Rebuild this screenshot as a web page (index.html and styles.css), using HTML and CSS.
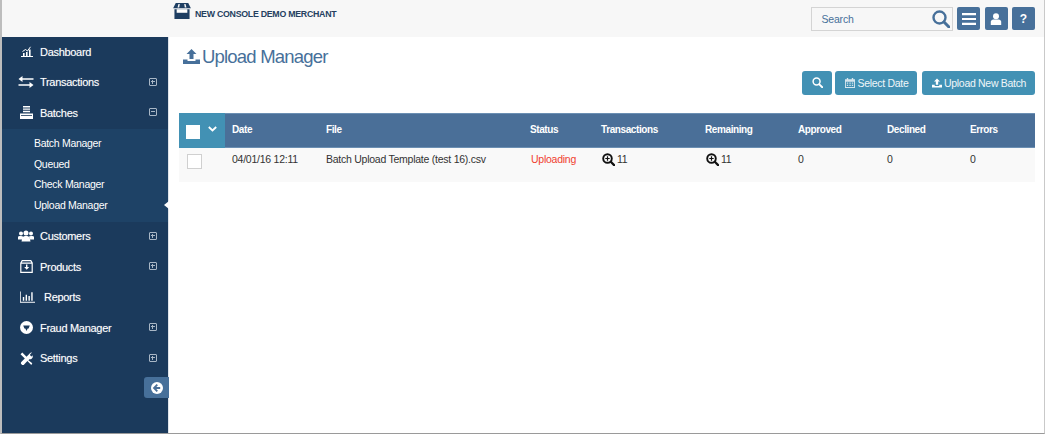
FILE: index.html
```html
<!DOCTYPE html>
<html lang="en">
<head>
<meta charset="utf-8">
<title>Upload Manager</title>
<link rel="stylesheet" href="styles.css">
</head>
<body>
<div class="app">
  <header class="topbar">
    <div class="brand">
      <svg class="brand-icon" viewBox="0 0 20 18"><path fill="#1f3f63" d="M3 0h14l3 6H0z"/><path fill="#1f3f63" d="M1.500 7h17v11h-17z"/><path fill="#fff" d="M4 7h12v4H4z"/><path fill="#f7f7f7" d="M6 1h1.500l-.6 4H5zM12.500 1H14l1 4h-1.900z"/></svg>
      <span class="brand-name">NEW CONSOLE DEMO MERCHANT</span>
    </div>
    <div class="top-tools">
      <div class="search">
        <span class="search-text">Search</span>
        <svg class="search-icon" viewBox="0 0 18 18"><circle cx="7.500" cy="7.500" r="6" fill="none" stroke="#47709a" stroke-width="2.400"/><path d="M12 12l5 5" stroke="#47709a" stroke-width="3" stroke-linecap="round"/></svg>
      </div>
      <div class="tool-btn"><svg class="i14" viewBox="0 0 14 14"><path fill="#fff" d="M0 1h14v2.200H0zM0 5.900h14v2.200H0zM0 10.800h14V13H0z"/></svg></div>
      <div class="tool-btn"><svg class="i12" viewBox="0 0 12 12"><circle cx="6" cy="3.300" r="3" fill="#fff"/><path fill="#fff" d="M.8 12V8.800C.8 7.300 2 6.400 3.400 6.400h5.200c1.400 0 2.600.9 2.600 2.400V12z"/></svg></div>
      <div class="tool-btn help">?</div>
    </div>
  </header>
  <div class="body">
    <nav class="sidebar">
      <a class="nav-item"><svg class="nav-icon dash-icon" viewBox="0 0 12 11"><path fill="none" stroke="#fff" stroke-width="1" d="M0 10.500h12M1.500 5.500l3-2 2 1.500L9.500.8"/><path fill="#fff" d="M2 7h1.600v3H2zM5 6h1.600v4H5zM8 3.500h1.600V10H8z"/></svg><span>Dashboard</span></a>
      <a class="nav-item"><svg class="nav-icon wide" viewBox="0 0 15 12"><path fill="#fff" d="M4 0v2.200h11v1.600H4V6L0 3zM11 6v2.200H0v1.600h11V12l4-3z"/></svg><span>Transactions</span><i class="toggle plus"></i></a>
      <a class="nav-item"><svg class="nav-icon batch-icon" viewBox="0 0 13 13"><path fill="#fff" d="M3 0h7v1.400H3zM3 2.400h7v1.400H3zM3 4.800h7v1.400H3zM0 7.500h13V13H0z"/><path fill="#1b3a5c" d="M1 9h11v.8H1z"/></svg><span>Batches</span><i class="toggle minus"></i></a>
      <div class="subnav">
        <a>Batch Manager</a>
        <a>Queued</a>
        <a>Check Manager</a>
        <a class="active">Upload Manager</a>
      </div>
      <a class="nav-item"><svg class="nav-icon wide" viewBox="0 0 16 11"><circle cx="3" cy="3" r="2" fill="#fff"/><circle cx="13" cy="3" r="2" fill="#fff"/><circle cx="8" cy="2.500" r="2.500" fill="#fff"/><path fill="#fff" d="M0 9V6.500C0 5.700 1 5.400 3 5.400c1 0 1.600.2 2 .5L4 9zM16 9V6.500c0-.8-1-1.100-3-1.100-1 0-1.600.2-2 .5l1 3.100zM3.500 11l1-4c.3-1 1.700-1.500 3.500-1.500s3.200.5 3.500 1.500l1 4z"/></svg><span>Customers</span><i class="toggle plus"></i></a>
      <a class="nav-item"><svg class="nav-icon" viewBox="0 0 13 13"><path fill="none" stroke="#fff" stroke-width="1.200" d="M.8 3L2.200.7h8.600L12.200 3v9.300H.8zM.8 3.200h11.400"/><path fill="#fff" d="M6 4.500h1.400V7h1.800L6.700 9.800 4.200 7H6z"/></svg><span>Products</span><i class="toggle plus"></i></a>
      <a class="nav-item"><svg class="nav-icon reports-icon" viewBox="0 0 16 12"><path fill="#fff" d="M0 0h.8v11H16v1H0zM3 6h1.500v4H3zM6 3.500h1.500V10H6zM9 5h1.500v5H9zM12 1h1.500v9H12z"/></svg><span>Reports</span></a>
      <a class="nav-item"><svg class="nav-icon" viewBox="0 0 13 13"><circle cx="6.500" cy="6.500" r="6.500" fill="#fff"/><path fill="#1b3a5c" d="M3.200 4.500h6.600L8.600 7.600H7.700L6.500 10 5.300 7.600H4.400z"/></svg><span>Fraud Manager</span><i class="toggle plus"></i></a>
      <a class="nav-item"><svg class="nav-icon" viewBox="0 0 13 13"><path fill="#fff" d="M.5 2.300L2.300.5 6.500 4.700l3-3C9.700 1 10.800.3 12 .4L10 2.600l.6 1.500 1.500.5L12.600 3c.6 1.500.2 3-1.200 3.900-.7.400-1.400.4-2 .3l-1 1 3.900 3-1 1.700-3.900-3.800-3.500 3.600c-.6.600-1.500.6-2 0l-.6-.6c-.6-.6-.5-1.400 0-2l3.500-3.500z"/></svg><span>Settings</span><i class="toggle plus"></i></a>
      <div class="collapse"><svg class="i12" viewBox="0 0 12 12"><circle cx="6" cy="6" r="6" fill="#fff"/><path fill="none" stroke="#4a6f98" stroke-width="1.800" d="M6.300 2.600L3 6l3.300 3.400M3.200 6h6"/></svg></div>
    </nav>
    <main class="content">
      <h1 class="title"><svg class="title-icon" viewBox="0 0 17 15"><path fill="#47709a" d="M8.500 0l5 5h-3v5h-4V5h-3zM0 10.500h4.500V12h8v-1.500H17V15H0z"/></svg><span>Upload Manager</span></h1>
      <div class="actions">
        <div class="btn btn-search"><svg class="i11" viewBox="0 0 12 12"><circle cx="5" cy="5" r="3.800" fill="none" stroke="#fff" stroke-width="1.600"/><path d="M8 8l3.200 3.200" stroke="#fff" stroke-width="2" stroke-linecap="round"/></svg></div>
        <div class="btn btn-date"><svg class="i10" viewBox="0 0 11 11"><path fill="#d7e6ee" d="M0 1.500h2V0h1.500v1.500h4V0H9v1.500h2V11H0zM1 4v6h9V4z"/><path fill="#d7e6ee" d="M2 5h1.500v1.300H2zM4.800 5h1.500v1.300H4.800zM7.500 5H9v1.300H7.500zM2 7.500h1.500v1.300H2zM4.800 7.500h1.500v1.300H4.800zM7.500 7.500H9v1.300H7.500z"/></svg><span>Select Date</span></div>
        <div class="btn btn-upload"><svg class="i10" viewBox="0 0 11 10"><path fill="#fff" d="M5.500 0l3.300 3.300H6.800V7H4.200V3.300H2.200zM0 7h3v1.200h5V7h3v3H0z"/></svg><span>Upload New Batch</span></div>
      </div>
      <div class="grid head">
        <div class="check-cell"><span class="check-box"></span><svg class="chev" viewBox="0 0 9 6"><path fill="none" stroke="#fff" stroke-width="1.800" d="M.8 1l3.700 3.500L8.200 1"/></svg></div>
        <div>Date</div><div>File</div><div>Status</div><div>Transactions</div><div>Remaining</div><div>Approved</div><div>Declined</div><div>Errors</div>
      </div>
      <div class="grid row">
        <div class="row-check"><span class="row-box"></span></div>
        <div>04/01/16 12:11</div>
        <div>Batch Upload Template (test 16).csv</div>
        <div class="uploading">Uploading</div>
        <div class="count"><svg class="zoom-icon" viewBox="0 0 13 13"><circle cx="5.500" cy="5.500" r="4.300" fill="none" stroke="#111" stroke-width="1.900"/><path d="M8.800 8.800l3.300 3.300" stroke="#111" stroke-width="2.200" stroke-linecap="round"/><path d="M3.300 5.500h4.400M5.500 3.300v4.400" stroke="#111" stroke-width="1.200"/></svg><span>11</span></div>
        <div class="count"><svg class="zoom-icon" viewBox="0 0 13 13"><circle cx="5.500" cy="5.500" r="4.300" fill="none" stroke="#111" stroke-width="1.900"/><path d="M8.800 8.800l3.300 3.300" stroke="#111" stroke-width="2.200" stroke-linecap="round"/><path d="M3.300 5.500h4.400M5.500 3.300v4.400" stroke="#111" stroke-width="1.200"/></svg><span>11</span></div>
        <div>0</div><div>0</div><div>0</div>
      </div>
    </main>
  </div>
</div>
</body>
</html>
```

FILE: styles.css
```css
* { box-sizing: border-box; }
html, body { margin: 0; height: 100%; overflow: hidden; background: #fff; }
body { font-family: "Liberation Sans", Arial, sans-serif; }
svg { display: block; flex: none; }

.app { width: 1045px; height: 434px; display: flex; flex-direction: column; border-left: 2px solid #bdbdbd; border-right: 1px solid #c9c9c9; border-bottom: 1px solid #9a9a9a; }

.topbar { height: 37px; flex: none; background: #f7f7f7; display: flex; justify-content: space-between; align-items: flex-start; }
.brand { display: flex; align-items: flex-start; margin-left: 171px; padding-top: 3px; gap: 4px; }
.brand-icon { width: 18px; height: 16px; }
.brand-name { font-size: 8.800px; letter-spacing: -.27px; font-weight: 700; color: #24405f; margin-top: 6px; white-space: nowrap; }
.top-tools { display: flex; gap: 4.500px; padding: 7px 9px 0 0; }
.search { width: 142px; height: 24px; background: #f7f7f7; border: 1px solid #d4d4d4; display: flex; align-items: center; justify-content: space-between; padding: 0 2px 0 10px; }
.search-text { font-size: 10.500px; letter-spacing: -.2px; color: #47709a; }
.search-icon { width: 18px; height: 18px; }
.tool-btn { width: 23px; height: 23px; background: #47709a; border-radius: 2px; display: flex; align-items: center; justify-content: center; color: #fff; font-weight: 700; font-size: 12px; }
.i14 { width: 14px; height: 14px; }
.i12 { width: 12px; height: 12px; }
.i11 { width: 11px; height: 11px; }
.i10 { width: 10px; height: 10px; }

.body { flex: 1; display: flex; min-height: 0; }

.sidebar { width: 167px; flex: none; background: #1b3a5c; border-right: 1px solid #dfe4ea; display: flex; flex-direction: column; position: relative; }
.nav-item { height: 30.500px; flex: none; display: flex; align-items: center; padding: 0 0 1.400px 18px; color: #fff; font-size: 11px; letter-spacing: -.3px; text-shadow: 0 0 1px rgba(255,255,255,.4); position: relative; }
.nav-icon { width: 13px; height: 13px; margin-right: 7px; }
.nav-icon.dash-icon { width: 12px; height: 11px; margin: 0 7px 0 1px; }
.nav-icon.batch-icon { width: 13px; height: 13px; margin: 0 7px 0 0; }
.nav-icon.wide { width: 16px; height: 12px; margin-left: -2px; margin-right: 6px; }
.nav-icon.reports-icon { width: 15px; height: 12px; margin-right: 9px; }
.toggle { position: absolute; left: 147px; top: 50%; width: 8px; height: 8px; margin-top: -5px; border: 1px solid #a9b7c6; border-radius: 1px; }
.toggle::before { content: ""; position: absolute; left: 1px; right: 1px; top: 2px; height: 1px; background: #a9b7c6; }
.toggle.plus::after { content: ""; position: absolute; top: 1px; bottom: 1px; left: 2px; width: 1px; background: #a9b7c6; }

.subnav { height: 93px; flex: none; background: #1e4266; padding: 4.500px 0 0 32px; display: flex; flex-direction: column; }
.subnav a { height: 20.500px; flex: none; display: flex; align-items: center; color: #fff; font-size: 10.500px; letter-spacing: -.3px; position: relative; }
.subnav a.active::after { content: ""; position: absolute; right: -1px; top: 50%; margin-top: -4px; border: 4px solid transparent; border-right: 5px solid #fff; border-left: 0; }
.collapse { position: absolute; right: -1px; top: 340px; width: 25px; height: 21px; background: #47709a; border-radius: 3px 0 0 3px; display: flex; align-items: center; justify-content: center; }

.content { flex: 1; min-width: 0; padding: 0 9px 0 10px; }
.title { margin: 0; height: 34px; padding-top: 5px; display: flex; align-items: center; gap: 2px; font-size: 18.500px; font-weight: 400; color: #47709a; letter-spacing: -.8px; }
.title-icon { width: 17px; height: 15px; margin-left: 4px; }
.actions { height: 42px; display: flex; justify-content: flex-end; gap: 3px; }
.btn { height: 24px; background: #4291b4; border-radius: 3px; display: flex; align-items: center; gap: 2px; padding: 0 0 1px 10px; color: #f0f6f9; font-size: 10.500px; letter-spacing: -.3px; }
.btn-search { width: 29.500px; }
.btn-date { width: 82.500px; gap: 3px; }
.btn-upload { width: 113px; margin-left: 2px; }

.grid { display: grid; grid-template-columns: 46px 94px 204px 71px 104px 93px 89px 83px 1fr; }
.grid > div { padding-left: 7px; }
.head { height: 35px; background: #4a6f98; border-top: 1px solid #6b8fb3; border-bottom: 1px solid #6b8fb3; padding-bottom: 2px; color: #fff; font-size: 10px; letter-spacing: -.4px; font-weight: 700; align-items: center; }
.grid > .check-cell { align-self: stretch; background: #4291b4; padding: 2px 0 0 7px; display: flex; align-items: center; gap: 8px; margin: -1px 0 -3px; }
.check-box { width: 14px; height: 14px; background: #fff; display: block; }
.chev { width: 9px; height: 6px; margin-top: -5px; }
.row { height: 34px; background: #f9f9f9; color: #333; font-size: 10.500px; letter-spacing: -.25px; padding-top: 5px; }
.grid > .row-check { padding-left: 8px; padding-top: 1px; }
.row-box { display: block; width: 15px; height: 15px; background: #fff; border: 1px solid #d0d0d0; }
.row > div { line-height: 13px; }
.row > .uploading { color: #f0402f; padding-left: 8px; }
.grid > .count { display: flex; align-items: flex-start; gap: 2px; padding-left: 8px; }
.zoom-icon { width: 13px; height: 13px; }
```
